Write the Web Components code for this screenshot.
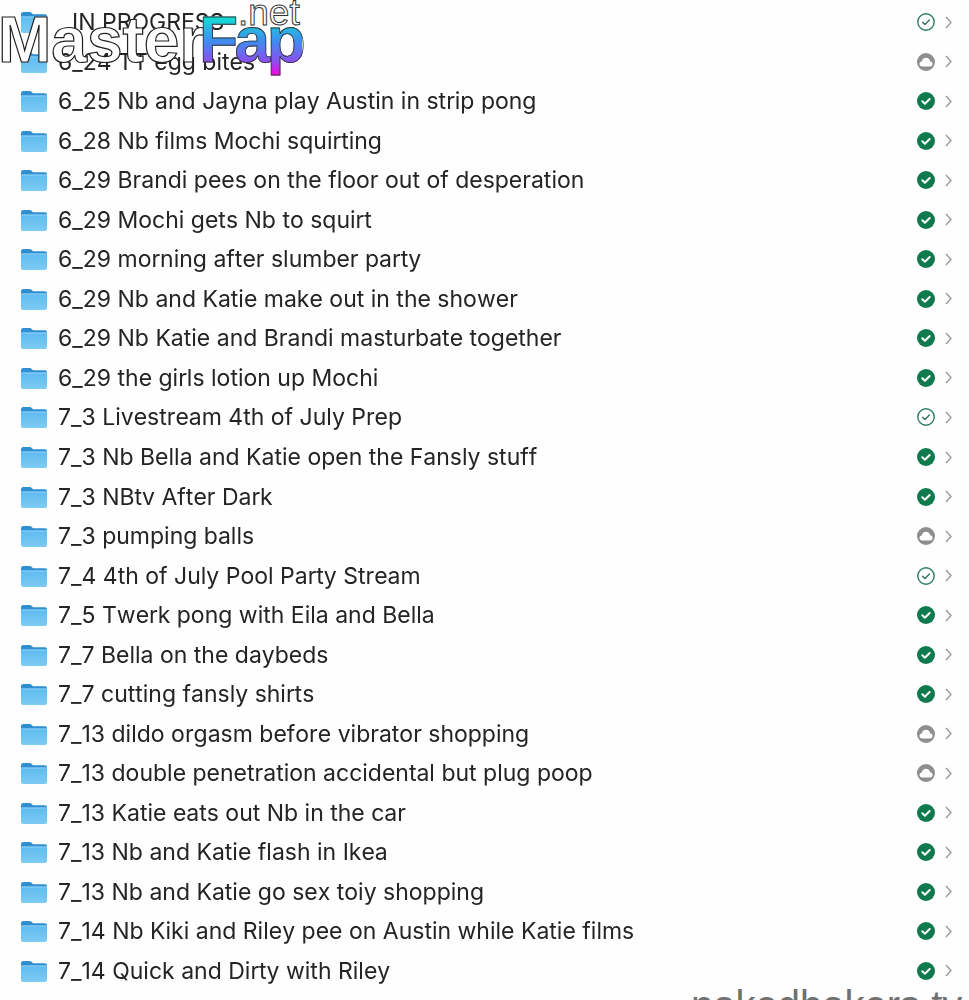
<!DOCTYPE html>
<html>
<head>
<meta charset="utf-8">
<title>Folders</title>
<style>
  html, body { margin: 0; height: 1000px; overflow: hidden; background: #fefefe; }
</style>
</head>
<body>
<file-page>
  <folder-row status="outline" indent>IN PROGRESS</folder-row>
  <folder-row status="cloud">6_24 TT egg bites</folder-row>
  <folder-row status="done">6_25 Nb and Jayna play Austin in strip pong</folder-row>
  <folder-row status="done">6_28 Nb films Mochi squirting</folder-row>
  <folder-row status="done">6_29 Brandi pees on the floor out of desperation</folder-row>
  <folder-row status="done">6_29 Mochi gets Nb to squirt</folder-row>
  <folder-row status="done">6_29 morning after slumber party</folder-row>
  <folder-row status="done">6_29 Nb and Katie make out in the shower</folder-row>
  <folder-row status="done">6_29 Nb Katie and Brandi masturbate together</folder-row>
  <folder-row status="done">6_29 the girls lotion up Mochi</folder-row>
  <folder-row status="outline">7_3 Livestream 4th of July Prep</folder-row>
  <folder-row status="done">7_3 Nb Bella and Katie open the Fansly stuff</folder-row>
  <folder-row status="done">7_3 NBtv After Dark</folder-row>
  <folder-row status="cloud">7_3 pumping balls</folder-row>
  <folder-row status="outline">7_4 4th of July Pool Party Stream</folder-row>
  <folder-row status="done">7_5 Twerk pong with Eila and Bella</folder-row>
  <folder-row status="done">7_7 Bella on the daybeds</folder-row>
  <folder-row status="done">7_7 cutting fansly shirts</folder-row>
  <folder-row status="cloud">7_13 dildo orgasm before vibrator shopping</folder-row>
  <folder-row status="cloud">7_13 double penetration accidental but plug poop</folder-row>
  <folder-row status="done">7_13 Katie eats out Nb in the car</folder-row>
  <folder-row status="done">7_13 Nb and Katie flash in Ikea</folder-row>
  <folder-row status="done">7_13 Nb and Katie go sex toiy shopping</folder-row>
  <folder-row status="done">7_14 Nb Kiki and Riley pee on Austin while Katie films</folder-row>
  <folder-row status="done">7_14 Quick and Dirty with Riley</folder-row>
  <folder-row status="done"></folder-row>
</file-page>
<site-mark></site-mark>
<corner-mark>nakedbakers.tv</corner-mark>

<script>
class FilePage extends HTMLElement {
  constructor() {
    super();
    this.attachShadow({ mode: 'open' });
    this.shadowRoot.innerHTML = `
      <style>
        :host { display: block; padding-top: 2.4px; height: 997.6px; overflow: hidden; filter: blur(0.35px); }
      </style>
      <slot></slot>
    `;
  }
}

class FolderIcon extends HTMLElement {
  constructor() {
    super();
    this.attachShadow({ mode: 'open' });
    this.shadowRoot.innerHTML = `
      <style>
        :host { display: block; width: 28px; height: 24px; }
        svg { display: block; }
      </style>
      <svg width="28" height="24" viewBox="0 0 28 24">
        <defs>
          <linearGradient id="front" x1="0" y1="0" x2="0" y2="1">
            <stop offset="0" stop-color="#5fbaf0"/>
            <stop offset="1" stop-color="#7ccbf3"/>
          </linearGradient>
        </defs>
        <path d="M1 4.500C1 2.800 2 2 3.400 2h6.200c1 0 1.500.4 2.200 1.100L13 4.200h12c1.300 0 2 .8 2 2v3H1z" fill="#2f8fd0"/>
        <rect x="1" y="6.500" width="26" height="16.500" rx="2" fill="url(#front)"/>
        <rect x="1" y="6.500" width="26" height="1" fill="#8ed2f6"/>
      </svg>
    `;
  }
}

class StatusIcon extends HTMLElement {
  static get observedAttributes() {
    return ['kind'];
  }

  constructor() {
    super();
    this.attachShadow({ mode: 'open' });
  }

  connectedCallback() {
    this.render();
  }

  attributeChangedCallback() {
    this.render();
  }

  render() {
    const kind = this.getAttribute('kind') || 'done';
    let body = '';
    if (kind === 'done') {
      body = `<circle cx="9" cy="9" r="9" fill="#0e7a4d"/>
        <path d="M5.300 9.200l2.600 2.500 4.800-4.700" fill="none" stroke="#fff" stroke-width="2" stroke-linecap="round" stroke-linejoin="round"/>`;
    } else if (kind === 'outline') {
      body = `<circle cx="9" cy="9" r="8.200" fill="none" stroke="#2a7f62" stroke-width="1.400"/>
        <path d="M5.600 9.200l2.400 2.300 4.400-4.400" fill="none" stroke="#3c6f5e" stroke-width="1.400" stroke-linecap="round" stroke-linejoin="round"/>`;
    } else {
      body = `<circle cx="9" cy="9" r="9" fill="#8e8e8c"/>
        <path d="M5.300 13.500c-1.600 0-2.800-1.100-2.800-2.500 0-1.300 1-2.400 2.300-2.500C5.100 6.400 6.900 4.800 9 4.800c2.100 0 3.800 1.400 4.200 3.500 1.400.1 2.400 1.300 2.400 2.700s-1.200 2.500-2.700 2.500z" fill="#fff"/>`;
    }
    this.shadowRoot.innerHTML = `
      <style>
        :host { display: block; width: 18px; height: 18px; }
        svg { display: block; }
      </style>
      <svg width="18" height="18" viewBox="0 0 18 18">${body}</svg>
    `;
  }
}

class FolderRow extends HTMLElement {
  constructor() {
    super();
    this.attachShadow({ mode: 'open' });
  }

  connectedCallback() {
    const status = this.getAttribute('status') || 'done';
    this.shadowRoot.innerHTML = `
      <style>
        :host {
          display: flex;
          align-items: center;
          height: 39.54px;
          padding: 0 17px 0 20px;
          font-family: Inter, "Liberation Sans", sans-serif;
          font-size: 23px;
          font-kerning: none;
          color: #242424;
        }
        :host([indent]) .name { padding-left: 14px; }
        folder-icon { margin-right: 10px; flex: none; }
        .name { flex: 1; white-space: nowrap; }
        status-icon { flex: none; margin-right: 10px; }
        svg { display: block; flex: none; }
      </style>
      <folder-icon></folder-icon>
      <span class="name"><slot></slot></span>
      <status-icon kind="${status}"></status-icon>
      <svg width="7" height="13" viewBox="0 0 7 13">
        <path d="M1 1l5 5.500-5 5.500" fill="none" stroke="#9a9a9a" stroke-width="1.400"/>
      </svg>
    `;
  }
}

class SiteMark extends HTMLElement {
  constructor() {
    super();
    this.attachShadow({ mode: 'open' });
    this.shadowRoot.innerHTML = `
      <style>
        :host {
          position: absolute;
          left: 0;
          top: 0;
          display: block;
          width: 310px;
          height: 85px;
          font-family: "Liberation Sans", sans-serif;
          font-size: 64px;
          font-weight: 700;
          line-height: 1;
        }
        .master, .fap, .net { position: absolute; white-space: nowrap; }
        .master {
          left: -2px;
          top: 8px;
          color: #fff;
          -webkit-text-stroke: 1.2px #222;
        }
        .fap {
          left: 199px;
          top: 8px;
          padding-bottom: 10px;
          letter-spacing: -3.5px;
          background: linear-gradient(180deg, #12dcd6 14%, #3f8cf0 45%, #8a50f0 72%, #ff00e0 92%);
          -webkit-background-clip: text;
          background-clip: text;
          color: transparent;
          -webkit-text-stroke: 0.8px #333;
        }
        .net {
          left: 238px;
          top: -6px;
          font-size: 37px;
          font-weight: 400;
          color: #fff;
          -webkit-text-stroke: 1px #333;
        }
      </style>
      <span class="net">.net</span>
      <span class="master">Master</span>
      <span class="fap">Fap</span>
    `;
  }
}

class CornerMark extends HTMLElement {
  constructor() {
    super();
    this.attachShadow({ mode: 'open' });
    this.shadowRoot.innerHTML = `
      <style>
        :host {
          position: absolute;
          left: 691px;
          top: 985px;
          display: block;
          font-family: "Liberation Sans", sans-serif;
          font-size: 40px;
          line-height: 1;
          color: #707070;
          white-space: nowrap;
        }
      </style>
      <slot></slot>
    `;
  }
}

customElements.define('file-page', FilePage);
customElements.define('folder-icon', FolderIcon);
customElements.define('status-icon', StatusIcon);
customElements.define('folder-row', FolderRow);
customElements.define('site-mark', SiteMark);
customElements.define('corner-mark', CornerMark);
</script>
</body>
</html>
